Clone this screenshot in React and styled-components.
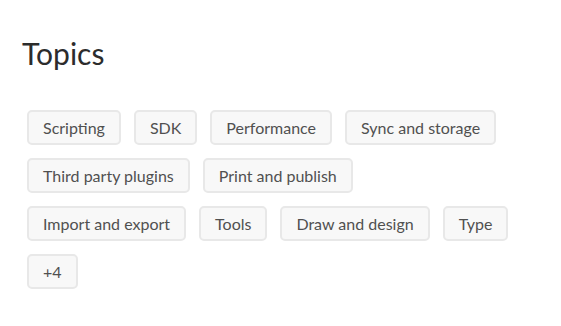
import React from "react";
import styled, { createGlobalStyle } from "styled-components";

const GlobalStyle = createGlobalStyle`
  body {
    margin: 0;
    background: #ffffff;
    font-family: "Lato", "Noto Sans", sans-serif;
  }
`;

const topics = [
  "Scripting",
  "SDK",
  "Performance",
  "Sync and storage",
  "Third party plugins",
  "Print and publish",
  "Import and export",
  "Tools",
  "Draw and design",
  "Type",
  "+4",
];

export default function App() {
  return (
    <>
      <GlobalStyle />
      <Section>
        <Title>Topics</Title>
        <TagList>
          {topics.map((t) => (
            <Tag key={t}>{t}</Tag>
          ))}
        </TagList>
      </Section>
    </>
  );
}

const Section = styled.section`
  padding: 34px 0 0 22px;
`;

const Title = styled.h2`
  margin: 0;
  font-family: "Lato", "Noto Sans", sans-serif;
  font-weight: 400;
  font-size: 30px;
  line-height: 38px;
  color: #2c2c2c;
`;

const TagList = styled.div`
  display: flex;
  flex-wrap: wrap;
  width: 490px;
  gap: 13px 13px;
  margin-top: 38px;
  padding-left: 5px;
`;

const Tag = styled.button`
  height: 35px;
  box-sizing: border-box;
  padding: 0 14px;
  background: #f8f8f8;
  border: 2px solid #e8e8e8;
  border-radius: 5px;
  font-family: "Lato", "Noto Sans", sans-serif;
  font-size: 16px;
  color: #505050;
  cursor: pointer;
`;
